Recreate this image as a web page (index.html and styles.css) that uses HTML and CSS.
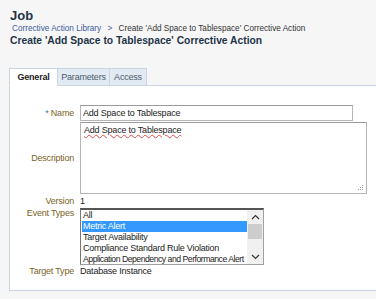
FILE: index.html
```html
<!DOCTYPE html>
<html lang="en">
<head>
    <meta charset="UTF-8">
    <title>Job - Create Corrective Action</title>
    <link rel="stylesheet" href="styles.css">
</head>
<body>
    <div class="header">
        <h1>Job</h1>
        <div class="crumbs">
            <a href="#">Corrective Action Library</a>
            <span class="sep">&gt;</span>
            <span>Create 'Add Space to Tablespace' Corrective Action</span>
        </div>
        <h2>Create 'Add Space to Tablespace' Corrective Action</h2>
    </div>

    <div class="tabs">
        <div class="tab active">General</div>
        <div class="tab">Parameters</div>
        <div class="tab">Access</div>
    </div>

    <div class="panel">
        <div class="form">
            <label class="lbl name-lbl"><span class="req">*</span> Name</label>
            <div class="field">
                <div class="input">Add Space to Tablespace</div>
            </div>

            <label class="lbl desc-lbl">Description</label>
            <div class="field">
                <div class="textarea">
                    <span class="misspelt">Add Space to Tablespace</span>
                    <svg class="grip" width="6" height="6" viewBox="0 0 6 6">
                        <rect x="4" y="0" width="1" height="1" fill="#999"/>
                        <rect x="2" y="2" width="1" height="1" fill="#999"/>
                        <rect x="4" y="2" width="1" height="1" fill="#999"/>
                        <rect x="0" y="4" width="1" height="1" fill="#999"/>
                        <rect x="2" y="4" width="1" height="1" fill="#999"/>
                        <rect x="4" y="4" width="1" height="1" fill="#999"/>
                    </svg>
                </div>
            </div>

            <label class="lbl">Version</label>
            <div class="value version">1</div>

            <label class="lbl types-lbl">Event Types</label>
            <div class="field">
                <div class="listbox">
                    <div class="options">
                        <div class="opt">All</div>
                        <div class="opt selected">Metric Alert</div>
                        <div class="opt">Target Availability</div>
                        <div class="opt">Compliance Standard Rule Violation</div>
                        <div class="opt long">Application Dependency and Performance Alert</div>
                    </div>
                    <div class="scrollbar">
                        <svg width="9" height="6" viewBox="0 0 9 6"><path d="M1 5 L4.5 1.5 L8 5" fill="none" stroke="#333" stroke-width="1.2"/></svg>
                        <div class="thumb"></div>
                        <div class="track"></div>
                        <svg width="9" height="6" viewBox="0 0 9 6"><path d="M1 1 L4.5 4.5 L8 1" fill="none" stroke="#333" stroke-width="1.2"/></svg>
                    </div>
                </div>
            </div>

            <label class="lbl">Target Type</label>
            <div class="value">Database Instance</div>
        </div>
    </div>
</body>
</html>
```

FILE: styles.css
```css
* {
    margin: 0;
    padding: 0;
    box-sizing: border-box;
}

body {
    font-family: 'Liberation Sans', Arial, sans-serif;
    font-size: 9px;
    color: #222;
    background-color: #f6f6f6;
    width: 376px;
    height: 299px;
    overflow: hidden;
}

.header {
    padding: 8px 0 0 10px;
}

.header h1 {
    font-size: 13px;
    font-weight: 700;
    color: #1e3448;
    line-height: 15px;
}

.crumbs {
    margin: 1px 0 0 2px;
    font-size: 8.2px;
    line-height: 10px;
    color: #333;
}

.crumbs a {
    color: #3d5d9c;
    text-decoration: none;
}

.crumbs .sep {
    color: #3d5d9c;
    margin: 0 4px 0 4px;
}

.header h2 {
    font-size: 10.3px;
    font-weight: 700;
    color: #1e3448;
    line-height: 13px;
}

.tabs {
    display: flex;
    margin: 21px 0 0 9px;
    height: 18px;
}

.tab {
    height: 18px;
    line-height: 16px;
    border: 1px solid #c9d5e1;
    border-left: none;
    background: #e2eaf3;
    color: #4c5c6c;
    text-align: center;
    letter-spacing: -0.2px;
}

.tab:nth-child(1) {
    width: 49px;
    border-left: 1px solid #c9d5e1;
}

.tab:nth-child(2) {
    width: 52px;
}

.tab:nth-child(3) {
    width: 37px;
}

.tab.active {
    background: #fff;
    border-bottom-color: #fff;
    color: #222;
    font-weight: 700;
}

.panel {
    margin: -1px 0 0 9px;
    height: 206px;
    background: #fff;
    border: 1px solid #c9d5e1;
    border-right: none;
    padding-top: 19px;
}

.form {
    display: grid;
    grid-template-columns: 64px 1fr;
    column-gap: 6px;
    align-items: center;
}

.lbl {
    text-align: right;
    color: #7a6427;
    letter-spacing: -0.2px;
}

.req {
    color: #3d7ab8;
}

.types-lbl {
    align-self: start;
    margin-top: 1px;
}

.input {
    width: 273px;
    height: 16px;
    border: 1px solid #b5b5b5;
    border-top-color: #9a9a9a;
    padding: 0 2px;
    line-height: 14px;
    letter-spacing: -0.2px;
}

.textarea {
    position: relative;
    width: 287px;
    height: 72px;
    margin-top: 1px;
    border: 1px solid #b5b5b5;
    border-top-color: #9a9a9a;
    padding: 2px 3px;
    line-height: 11px;
    letter-spacing: -0.2px;
}

.misspelt {
    text-decoration: underline wavy #e24a4a;
    text-decoration-thickness: 1px;
    text-underline-offset: 1px;
}

.grip {
    position: absolute;
    right: 2px;
    bottom: 2px;
}

.value {
    line-height: 12px;
    letter-spacing: -0.2px;
}

.version {
    margin-top: 1px;
}

.listbox {
    display: flex;
    width: 184px;
    height: 57px;
    margin-top: 1px;
    border: 1px solid #a0a0a0;
    border-top: 2px solid #555;
    border-left-color: #777;
}

.options {
    flex: 1;
    min-width: 0;
    padding-left: 1px;
}

.opt {
    height: 11px;
    line-height: 11px;
    padding-left: 1px;
    white-space: nowrap;
    overflow: hidden;
    letter-spacing: -0.25px;
}

.opt.long {
    font-size: 8.7px;
    letter-spacing: -0.5px;
}

.opt.selected {
    background: #3399ff;
    color: #fff;
}

.scrollbar {
    width: 16px;
    flex-shrink: 0;
    background: #f0f0f0;
    display: flex;
    flex-direction: column;
    align-items: center;
}

.scrollbar svg {
    margin: 4px 0;
}

.thumb {
    width: 14px;
    height: 15px;
    background: #cdcdcd;
}

.track {
    flex: 1;
}

.scrollbar svg:last-child {
    margin: 0 0 4px;
}
```
